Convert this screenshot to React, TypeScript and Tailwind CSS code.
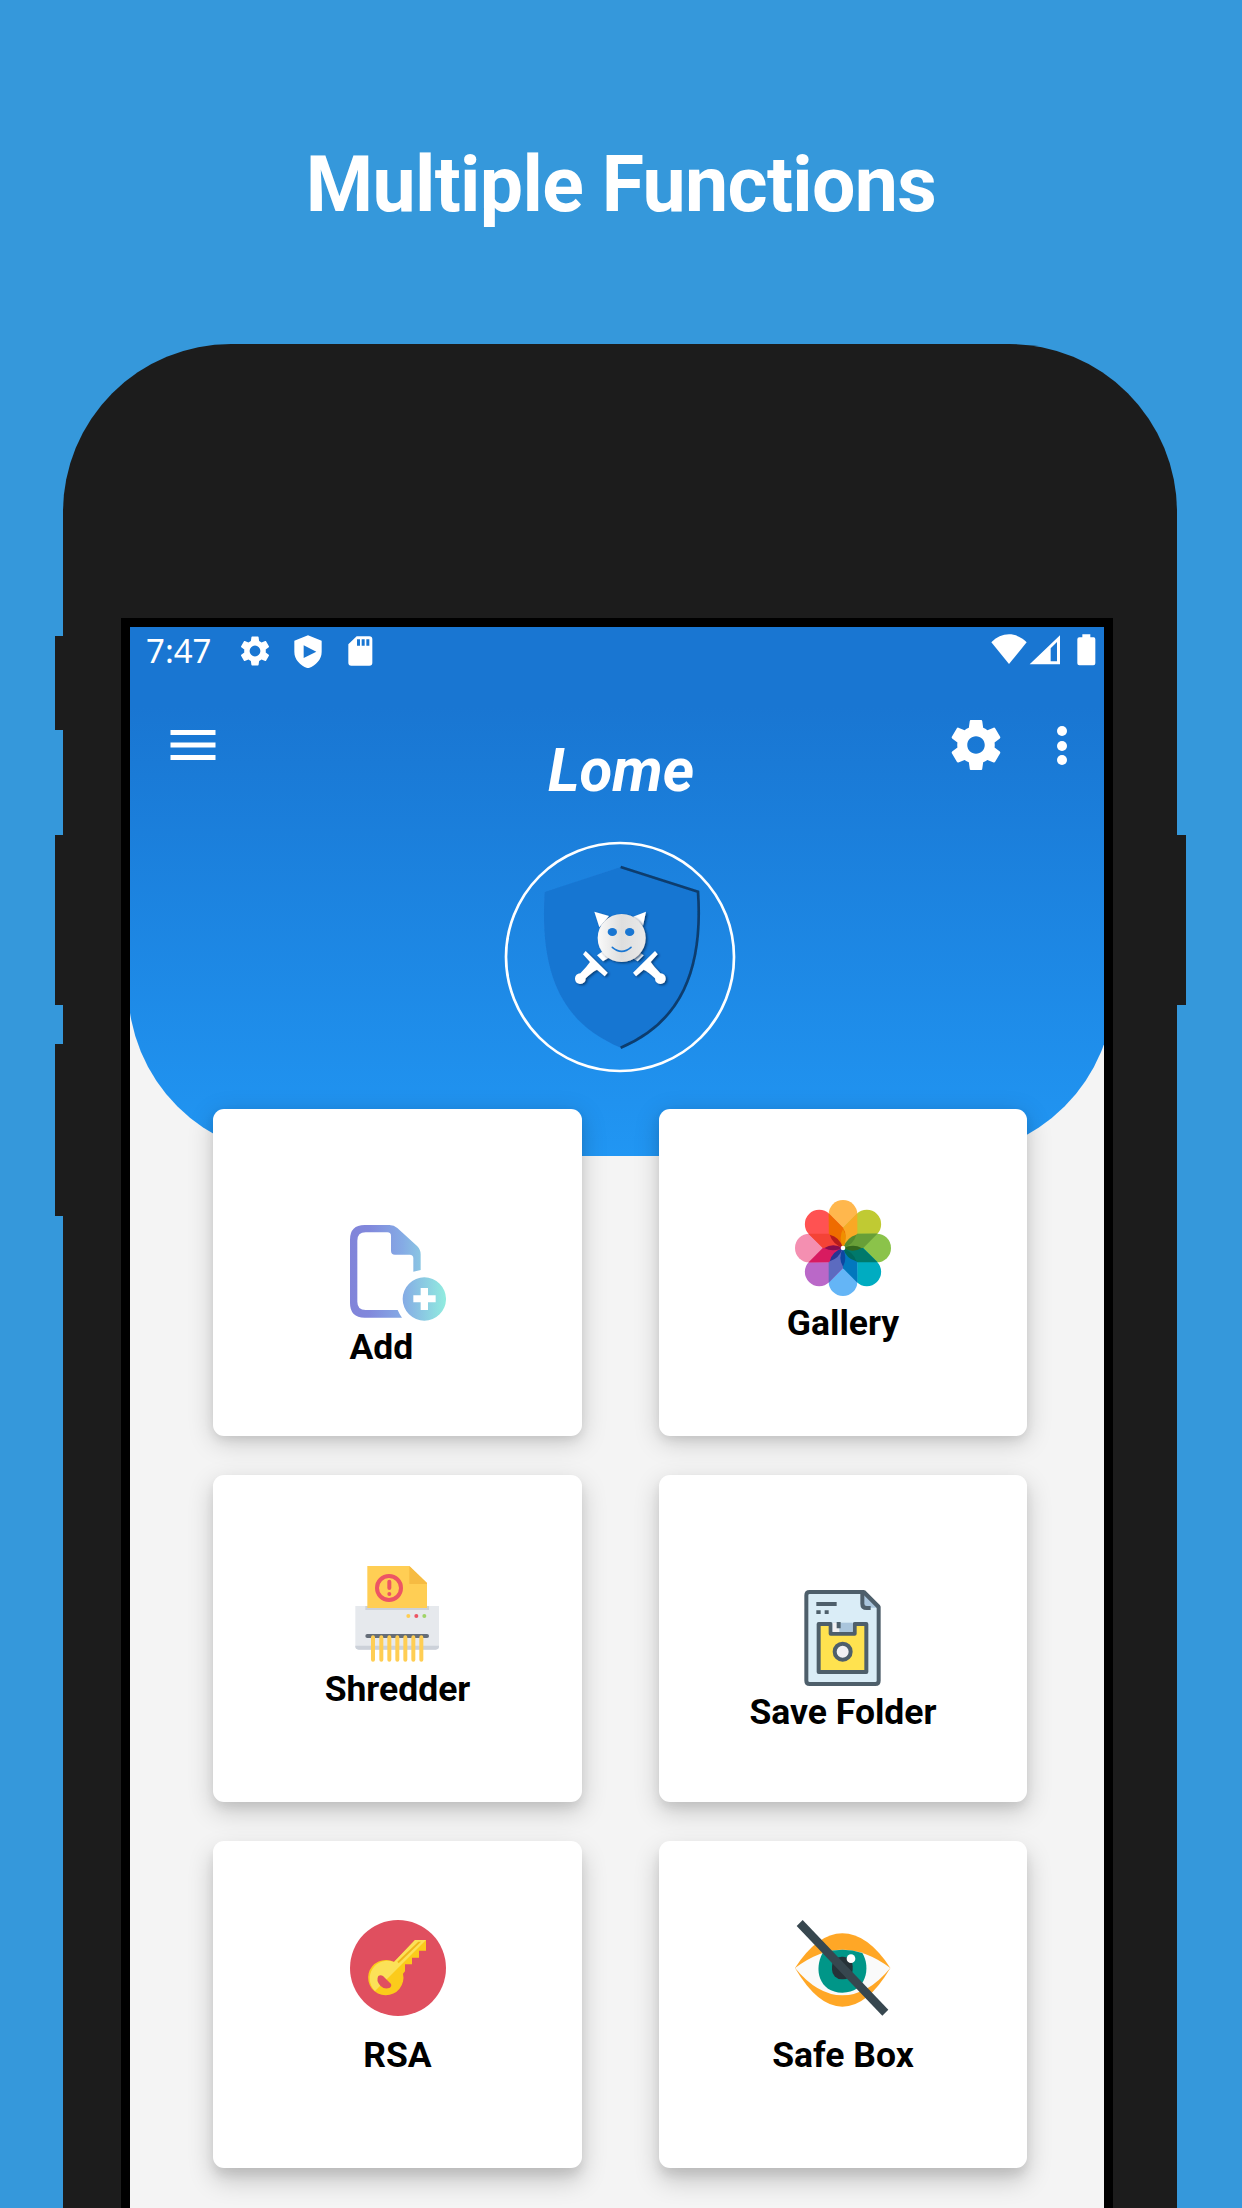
import React from "react";

function StatusIcons() {
  return (
    <div className="flex h-9 items-center">
      <svg className="ml-[21px] size-9" viewBox="0 0 24 24" fill="white">
        <path fillRule="evenodd" d="M19.14 12.94c.04-.3.06-.61.06-.94s-.02-.64-.07-.94l2.03-1.58c.18-.14.23-.41.12-.61l-1.92-3.32c-.12-.22-.37-.29-.59-.22l-2.39.96c-.5-.38-1.03-.7-1.62-.94L14.4 2.81C14.36 2.57 14.16 2.4 13.92 2.4h-3.84c-.24 0-.43.17-.47.41L9.25 5.35c-.59.24-1.13.57-1.62.94l-2.39-.96c-.22-.08-.47 0-.59.22L2.74 8.87c-.12.21-.08.47.12.61l2.03 1.58c-.05.3-.09.63-.09.94s.02.64.07.94l-2.03 1.58c-.18.14-.23.41-.12.61l1.92 3.32c.12.22.37.29.59.22l2.39-.96c.5.38 1.03.7 1.62.94l.36 2.54c.05.24.24.41.48.41h3.84c.24 0 .44-.17.47-.41l.36-2.54c.59-.24 1.13-.56 1.62-.94l2.39.96c.22.08.47 0 .59-.22l1.92-3.32c.12-.22.07-.47-.12-.61zM12 15.6a3.6 3.6 0 1 1 0-7.2 3.6 3.6 0 0 1 0 7.2z" />
      </svg>
      <svg className="ml-[21px] h-[33px] w-[28px]" viewBox="520 70 84 99" fill="white">
        <path fillRule="evenodd" d="M562 71L603 87V120C603 145 584 162 562 170C540 162 521 145 521 120V87ZM549 101V139L587 120Z" />
      </svg>
      <svg className="ml-[26px] h-[30px] w-[25px]" viewBox="685 75 75 90" fill="white">
        <path fillRule="evenodd" d="M711 76H749Q758 76 758 85V155Q758 164 749 164H695Q686 164 686 155V100ZM712 85V104H721V85ZM726 85V104H735V85ZM740 85V104H749V85Z" />
      </svg>
    </div>
  );
}

function StatusBar() {
  return (
    <div className="flex h-[48px] items-center pl-[16px]">
      <span className="w-[70px] font-['Noto_Sans'] text-[33px] leading-[48px] text-white">7:47</span>
      <StatusIcons />
      <svg className="mt-[-2px] ml-[618px] h-[32px] w-[106px]" viewBox="272 71 318 96" fill="white">
        <path d="M273 96C303 64 349 64 379 96L326 161Z" />
        <path fillRule="evenodd" d="M479 75V162H388ZM470 95L451 114V153H470Z" />
        <path d="M546 72H570V81H580Q585 81 585 87V159Q585 165 579 165H537Q531 165 531 159V87Q531 81 537 81H546Z" />
      </svg>
    </div>
  );
}

function Toolbar() {
  return (
    <div className="flex h-[148px] items-start pt-[40px]">
      <svg className="ml-[33px] size-[60px]" viewBox="0 0 24 24" fill="white">
        <path d="M3 18h18v-2H3v2zm0-5h18v-2H3v2zm0-7v2h18V6H3z" />
      </svg>
      <h2 className="ml-[323px] w-[150px] text-center font-['Roboto'] text-[60px] leading-[112px] font-bold text-white italic">Lome</h2>
      <svg className="ml-[250px] size-[60px]" viewBox="0 0 24 24" fill="white">
        <path d="M19.43 12.98c.04-.32.07-.64.07-.98s-.03-.66-.07-.98l2.11-1.65c.19-.15.24-.42.12-.64l-2-3.46c-.12-.22-.39-.3-.61-.22l-2.49 1c-.52-.4-1.08-.73-1.69-.98l-.38-2.65C14.46 2.18 14.25 2 14 2h-4c-.25 0-.46.18-.49.42l-.38 2.65c-.61.25-1.17.59-1.69.98l-2.49-1c-.23-.09-.49 0-.61.22l-2 3.46c-.13.22-.07.49.12.64l2.11 1.65c-.04.32-.07.65-.07.98s.03.66.07.98l-2.11 1.65c-.19.15-.24.42-.12.64l2 3.46c.12.22.39.3.61.22l2.49-1c.52.4 1.08.73 1.69.98l.38 2.65c.03.24.24.42.49.42h4c.25 0 .46-.18.49-.42l.38-2.65c.61-.25 1.17-.59 1.69-.98l2.49 1c.23.09.49 0 .61-.22l2-3.46c.12-.22.07-.49-.12-.64l-2.11-1.65zM12 15.5c-1.93 0-3.5-1.57-3.5-3.5s1.57-3.5 3.5-3.5 3.5 1.57 3.5 3.5-1.57 3.5-3.5 3.5z" />
      </svg>
      <div className="mt-[11px] ml-[51px] flex flex-col gap-[4.5px]">
        <i className="size-[10px] rounded-full bg-white" />
        <i className="size-[10px] rounded-full bg-white" />
        <i className="size-[10px] rounded-full bg-white" />
      </div>
    </div>
  );
}

function Sword() {
  return (
    <g fill="white">
      <path d="M345 690L322 706L340 724L362 710Z" />
      <path d="M288 693L354 758L345 769L322 749Q308 755 288 775Q288 791 271 792Q255 790 256 775Q257 761 272 760Q290 742 301 726L280 703Z" />
    </g>
  );
}

function Emblem() {
  return (
    <svg className="mx-auto mt-[18px] h-[232px] w-[232px]" viewBox="43 363 696 696">
      <defs>
        <linearGradient id="face" x1="0" x2="1">
          <stop offset="0" stopColor="#fafafa" />
          <stop offset="0.5" stopColor="#dedede" />
          <stop offset="1" stopColor="#e9e9e9" />
        </linearGradient>
        <filter id="soft"><feGaussianBlur stdDeviation="2" /></filter>
        <filter id="drop" x="-20%" y="-20%" width="140%" height="140%">
          <feDropShadow dx="5" dy="4" stdDeviation="3" floodColor="#062f5c" floodOpacity="0.75" />
        </filter>
      </defs>
      <circle cx="391" cy="711" r="342" fill="none" stroke="white" strokeWidth="8" />
      <path d="M393 441L165 516C150 760 213 908 393 983C573 908 643 750 626 515Z" fill="#1976d2" filter="url(#soft)" />
      <path d="M393 441L625 515C641 750 573 908 393 983" fill="none" stroke="#0b3c6e" strokeWidth="8" filter="url(#soft)" />
      <g filter="url(#drop)">
        <path d="M314 575L358 588L329 622ZM469 575L430 590L460 617Z" fill="white" />
        <Sword />
        <g transform="matrix(-1 0 0 1 784 0)"><Sword /></g>
      </g>
      <g filter="url(#drop)">
        <circle cx="396" cy="654" r="72" fill="url(#face)" />
      </g>
      <ellipse cx="368" cy="636" rx="14" ry="12" fill="#1976d2" />
      <ellipse cx="420" cy="636" rx="14" ry="12" fill="#1976d2" />
      <path d="M368 682Q396 706 424 682" fill="none" stroke="#1976d2" strokeWidth="5" strokeLinecap="round" />
    </svg>
  );
}

function AddIcon() {
  return (
    <svg className="size-24 shrink-0" viewBox="89 75 288 288">
      <defs>
        <linearGradient id="add" gradientUnits="userSpaceOnUse" x1="89" x2="377" y1="0" y2="0">
          <stop offset="0" stopColor="#8184d9" />
          <stop offset="0.2" stopColor="#8188dc" />
          <stop offset="0.55" stopColor="#85abe5" />
          <stop offset="1" stopColor="#91ecdf" />
        </linearGradient>
      </defs>
      <g fill="url(#add)">
        <path fillRule="evenodd" d="M133 75H207Q221 75 231 84L291 139Q301 149 301 163V210L279 215V175Q279 164 268 164H224Q212 164 212 152V108Q212 97 201 97H136Q111 97 111 122V305Q111 330 136 330H232Q237 342 245 353H133Q89 353 89 309V119Q89 75 133 75Z" />
        <path fillRule="evenodd" d="M312 232A65 65 0 1 1 312 362A65 65 0 1 1 312 232ZM301 264V286H279V307H301V330H323V307H346V286H323V264Z" />
      </g>
    </svg>
  );
}

function GalleryIcon() {
  const petals = [
    ["#ffb74d", 0], ["#c0ca33", 45], ["#8bc34a", 90], ["#00acc1", 135],
    ["#64b5f6", 180], ["#ba68c8", 225], ["#f48fb1", 270], ["#ff5252", 315],
  ] as const;
  const overlaps = [
    ["#f9a825", 0], ["#689f38", 45], ["#00796b", 90], ["#0277bd", 135],
    ["#5c6bc0", 180], ["#d81b60", 225], ["#f44336", 270], ["#ef6c00", 315],
  ] as const;
  const cores = [
    ["#ef8f00", 0], ["#558b2f", 45], ["#33691e", 90], ["#00695c", 135],
    ["#0d47a1", 180], ["#283593", 225], ["#880e4f", 270], ["#b71c1c", 315],
  ] as const;
  return (
    <svg className="size-24 shrink-0" viewBox="0 0 288 288">
      {petals.map(([c, a]) => (
        <path key={c} fill={c} transform={`rotate(${a} 144 144)`} d="M101 43A43 43 0 0 1 187 43V101Q183 127 144 144Q105 127 101 101Z" />
      ))}
      {overlaps.map(([c, a]) => (
        <path key={c} fill={c} transform={`rotate(${a} 144 144)`} d="M144 144L144 84L187 40V101Q183 127 144 144Z" />
      ))}
      {cores.map(([c, a]) => (
        <path key={c} fill={c} transform={`rotate(${a} 144 144)`} d="M144 144Q130 112 144 88Q160 114 144 144Z" />
      ))}
      <circle cx="144" cy="144" r="7" fill="white" />
    </svg>
  );
}

function ShredderIcon() {
  return (
    <svg className="size-24 shrink-0" viewBox="119 48 288 288">
      <path d="M135 168H386V289Q386 299 376 299H145Q135 299 135 289Z" fill="#e6e9ed" />
      <path d="M135 287H386V289Q386 299 376 299H145Q135 299 135 289Z" fill="#ccd1d9" />
      <path d="M165 168H356V180H165Z" fill="#ccd1d9" />
      <path d="M171 48H297L350 99V174H171Z" fill="#ffce54" />
      <path d="M297 48L350 99V102H297Z" fill="#f6bb42" />
      <circle cx="236" cy="114" r="36" fill="none" stroke="#ed5564" strokeWidth="12" />
      <path d="M237 95V114" stroke="#ed5564" strokeWidth="12" strokeLinecap="round" />
      <circle cx="237" cy="132" r="6" fill="#ed5564" />
      <circle cx="294" cy="198" r="6" fill="#ffce54" />
      <circle cx="318" cy="198" r="6" fill="#ed5564" />
      <circle cx="342" cy="198" r="6" fill="#a0d468" />
      <path d="M171 258H350" stroke="#656d78" strokeWidth="12" strokeLinecap="round" />
      <path d="M188 262V329M213 262V329M237 262V329M261 262V329M285 262V329M309 262V329M333 262V329" stroke="#ffce54" strokeWidth="12" strokeLinecap="round" />
    </svg>
  );
}

function SaveIcon() {
  return (
    <svg className="size-24 shrink-0" viewBox="164 59 288 288">
      <g stroke="#4e5f6b" strokeWidth="12" strokeLinejoin="round">
        <path d="M208 65H370L415 110V331Q415 341 405 341H208Q198 341 198 331V75Q198 65 208 65Z" fill="#daedf7" />
        <path d="M366 67L413 112H378Q366 112 366 99Z" fill="#a9c5dc" stroke="none" />
        <path d="M366 67V100Q366 113 379 113H391" fill="none" />
        <path d="M370 65L415 110" fill="none" />
        <path d="M235 161H271V190H343V161H378V305H235Z" fill="#ffe24f" />
        <circle cx="307" cy="244" r="24" fill="#f1f1f3" />
      </g>
      <path d="M277 157H337V185H277Z" fill="#a9c5dc" />
      <path d="M277 157H297V185H277Z" fill="#f0f0f2" />
      <path d="M289 155H301V174H289ZM228 95H289V107H228ZM228 120H241V131H228ZM253 120H265V131H253Z" fill="#4e5f6b" />
    </svg>
  );
}

function KeyIcon() {
  return (
    <svg className="size-24 shrink-0" viewBox="60 60 288 288">
      <circle cx="204" cy="204" r="144" fill="#e04f5f" />
      <path d="M255 120H288V152H267V173H246V193H225V214L219 221A53 53 0 1 1 192 186Z" fill="#fbcb1b" />
      <path d="M255 120H288L135 273A53 53 0 0 1 192 186Z" fill="#fbe158" />
      <path d="M265 125H273L206 190L202 185Z" fill="#f0b51b" />
      <path d="M145 228Q152 223 159 228L183 252Q186 260 178 264Q163 269 151 257Q137 242 145 228Z" fill="#e04f5f" />
    </svg>
  );
}

function EyeIcon() {
  return (
    <svg className="size-24 shrink-0" viewBox="107 61 288 288">
      <path d="M107 205Q175 101 249 101Q325 101 393 205Q325 321 249 321Q175 321 107 205Z" fill="#ffa726" />
      <path d="M107 205Q180 150 249 150Q320 150 393 205Q325 287 249 287Q175 287 107 205Z" fill="#fafafa" />
      <path d="M190 160Q249 140 309 160C335 202 322 279 249 279C178 279 163 207 190 160Z" fill="#009688" />
      <rect x="218" y="171" width="62" height="68" rx="29" fill="#263238" />
      <circle cx="275" cy="177" r="13" fill="white" />
      <path d="M130 61L387 330L369 348L112 79Z" fill="#37474f" />
    </svg>
  );
}

type CardProps = { label: string; box: string; text?: string; children?: React.ReactNode };

function Card({ label, box, text = "text-center", children }: CardProps) {
  return (
    <div className={"flex h-[327px] flex-col items-center rounded-[11px] bg-white " + box}>
      {children}
      <p className={"font-['Roboto'] text-[35.5px] leading-[40px] font-bold whitespace-nowrap text-black " + text}>{label}</p>
    </div>
  );
}

const shadowTop = "shadow-[0_6px_26px_rgba(0,0,0,0.18),0_4px_10px_rgba(0,0,0,0.08)] ";
const shadowMiddle = "shadow-[0_9px_26px_rgba(0,0,0,0.19),0_6px_10px_rgba(0,0,0,0.07)] ";
const shadowLow = "shadow-[0_12px_26px_rgba(0,0,0,0.20),0_8px_10px_rgba(0,0,0,0.07)] ";

export default function App() {
  return (
    <main className="flex h-[2208px] w-[1242px] flex-col overflow-hidden bg-[#3598db]">
      <h1 className="h-[344px] pt-[139px] text-center font-['Roboto'] text-[77px] leading-[92px] font-bold tracking-[-0.65px] text-white">Multiple Functions</h1>
      <div className="flex h-[1864px] pl-[55px]">
        <div className="flex w-[8px] shrink-0 flex-col pt-[292px]">
          <i className="h-[94px] bg-[#1c1c1c]" />
          <i className="mt-[105px] h-[170px] bg-[#1c1c1c]" />
          <i className="mt-[39px] h-[172px] bg-[#1c1c1c]" />
        </div>
        <div className="w-[1114px] shrink-0 rounded-t-[168px] bg-[#1c1c1c] pt-[274px] pl-[58px]">
          <div className="h-[1590px] w-[992px] bg-black pt-[9px] pl-[9px]">
            <div className="h-[1581px] w-[974px] overflow-hidden bg-[#f4f4f4]">
              <header className="-ml-[2px] h-[529px] w-[986px] rounded-b-[169px] bg-linear-to-b from-[#1976d2] from-15% to-[#2196f3] pl-[2px]">
                <StatusBar />
                <Toolbar />
                <div className="w-[980px]"><Emblem /></div>
              </header>
              <section className="-mt-[47px] ml-[83px] grid w-[815px] grid-cols-[369px_368px] gap-x-[77px] gap-y-[39px]">
                <Card label="Add" box={shadowTop + "gap-[6px] pt-[116px]"} text="w-24 text-left"><AddIcon /></Card>
                <Card label="Gallery" box={shadowTop + "gap-[7px] pt-[91px]"}><GalleryIcon /></Card>
                <Card label="Shredder" box={shadowMiddle + "gap-[7px] pt-[91px]"}><ShredderIcon /></Card>
                <Card label="Save Folder" box={shadowMiddle + "gap-[6px] pt-[115px]"}><SaveIcon /></Card>
                <Card label="RSA" box={shadowLow + "gap-[19px] pt-[79px]"}><KeyIcon /></Card>
                <Card label="Safe Box" box={shadowLow + "gap-[19px] pt-[79px]"}><EyeIcon /></Card>
              </section>
            </div>
          </div>
        </div>
        <i className="mt-[491px] h-[170px] w-[9px] shrink-0 bg-[#1c1c1c]" />
      </div>
    </main>
  );
}
